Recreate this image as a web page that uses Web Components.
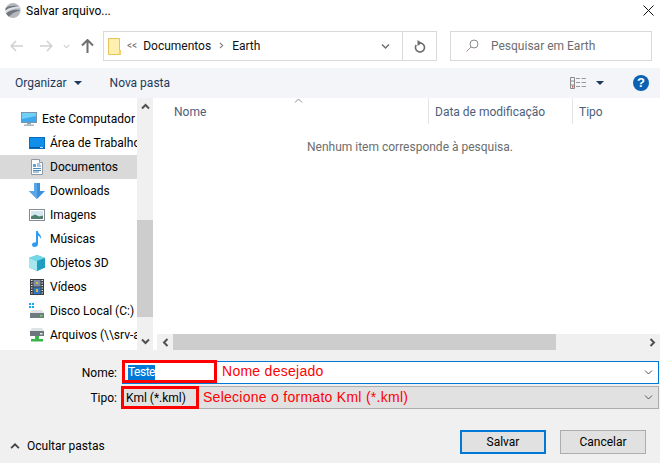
<!DOCTYPE html>
<html lang="pt">
<head>
<meta charset="utf-8">
<title>Salvar arquivo...</title>
<style>
    html, body { margin: 0; padding: 0; background: #fff; }
    body { font: 12px Roboto, "Noto Sans", sans-serif; color: #000; }
</style>
</head>
<body>
<save-dialog></save-dialog>

<script>
const chevron = (dir, color, width = 1.6, size = 9) => {
    const paths = {
        up: 'M1 6.5 4.5 3 8 6.5',
        down: 'M1 2.5 4.5 6 8 2.5',
        left: 'M6.5 1 3 4.5 6.5 8',
        right: 'M2.5 1 6 4.5 2.5 8'
    };
    return `<svg width="${size}" height="${size}" viewBox="0 0 9 9"><path d="${paths[dir]}" fill="none" stroke="${color}" stroke-width="${width}"/></svg>`;
};

const treeIcons = {
    computer: `<svg width="16" height="16" viewBox="0 0 16 16"><rect x=".5" y="1.5" width="15" height="10" fill="#3ea8ee" stroke="#7b95a8"/><path d="M1 2h14v3L1 8z" fill="#6fd0f8"/><rect x="6" y="12" width="4" height="1.5" fill="#8fa3b1"/><rect x="3" y="13.5" width="10" height="1.5" fill="#a9b6c0"/></svg>`,
    desktop: `<svg width="16" height="16" viewBox="0 0 16 16"><rect x=".5" y="2.5" width="15" height="11" fill="#0f8fea" stroke="#0a6cc0"/><path d="M1 12h14v1H1z" fill="#0859a5"/><path d="M11 12h3v1h-3z" fill="#bfe4fb"/></svg>`,
    documents: `<svg width="16" height="16" viewBox="0 0 16 16"><path d="M2.5.5h8l3 3v12h-11z" fill="#fff" stroke="#8f9aa5"/><path d="M10.5.5v3h3" fill="#e4eef6" stroke="#8f9aa5"/><path d="M4 5h3v3H4z" fill="#5ba3d8"/><path d="M8 5h3M8 7h4M4 9.5h8M4 11.5h8M4 13h6" stroke="#4d8bbd"/></svg>`,
    downloads: `<svg width="16" height="16" viewBox="0 0 16 16"><path d="M5 0h6v8h5l-8 8-8-8h5z" fill="#3b8fdd"/><path d="M5 0h3v16L0 8h5z" fill="#5ba6e6"/></svg>`,
    images: `<svg width="16" height="16" viewBox="0 0 16 16"><rect x=".5" y="2.500" width="15" height="11" fill="#fff" stroke="#858d94"/><rect x="2" y="4" width="12" height="8" fill="#d5e6ee"/><path d="M2 9.500l4-2 4 2 4-1V12H2z" fill="#4f7f6e"/></svg>`,
    music: `<svg width="16" height="16" viewBox="0 0 16 16"><path d="M7 0h1.800c.3 3 4.200 3.800 3.200 8-.6-2-2-3-3-3.200V13c0 1.700-1.500 3-3.500 3S3 15 3 13.500 4.800 11 7 11.200z" fill="#2d9cf0"/></svg>`,
    objects: `<svg width="16" height="16" viewBox="0 0 16 16"><path d="M8 0l8 3v9.500L8 16 0 12.500V3z" fill="#38bcd2"/><path d="M0 3l8 3v10l-8-3.500z" fill="#a5e6ef"/><path d="M8 0l8 3-8 3-8-3z" fill="#75d7e5"/><path d="M8 6l8-3v9.500L8 16z" fill="#1e9fc0"/></svg>`,
    videos: `<svg width="16" height="16" viewBox="0 0 16 16"><rect x="1" y="0" width="14" height="16" fill="#3b3f44"/><path d="M2 1.500h1.500M2 4h1.500M2 6.500h1.500M2 9h1.500M2 11.500h1.500M2 14h1.500M12.500 1.500H14M12.500 4H14M12.500 6.500H14M12.500 9H14M12.500 11.500H14M12.500 14H14" stroke="#e8e8e8"/><rect x="4.500" y="1" width="7" height="6.500" fill="#7d8fa4"/><rect x="4.500" y="8.500" width="7" height="6.500" fill="#2f78c4"/><path d="M7 3h2v2H7zM7 10h2v3H7z" fill="#e3b341"/></svg>`,
    disk: `<svg width="16" height="16" viewBox="0 0 16 16"><path d="M0 0h2v2H0zM3 0h2v2H3zM0 3h2v2H0zM3 3h2v2H3z" fill="#18a4f0"/><path d="M3 7h10l2 3H1z" fill="#dfe3e6"/><rect x="1" y="10" width="14" height="5" fill="#707a82"/><rect x="11" y="12" width="2.500" height="1.500" fill="#5fe05f"/></svg>`,
    network: `<svg width="16" height="16" viewBox="0 0 16 16"><path d="M3 1h10l2 3H1z" fill="#dfe3e6"/><rect x="1" y="4" width="14" height="5" fill="#6d767d"/><rect x="11" y="6" width="2.500" height="1.500" fill="#d6f5d6"/><path d="M6 9h4v3H6zM2 12h12v2.500H2z" fill="#39b54a"/></svg>`
};

class DialogTitlebar extends HTMLElement {
    constructor() {
        super();
        this.attachShadow({ mode: 'open' });
        this.shadowRoot.innerHTML = `
            <style>
                :host { display: flex; align-items: center; height: 21px; padding: 0 0 10px 5px; }
                svg { flex: none; }
                .title { margin-left: 5px; flex: 1; }
                .close { margin-right: 6px; }
            </style>
            <svg width="16" height="15" viewBox="0 0 16 15">
                <circle cx="8" cy="7.500" r="7.500" fill="#b4b8bd"/>
                <path d="M.6 5C4 2.600 10 2.200 15 3.600 10 3.500 5 4.500.4 7.500zM.8 10.500C5 7 11 6 15.700 7.500 11 8 7 10 4 13.700z" fill="#717780"/>
                <path d="M.4 7.500C5 4.500 10 3.500 15 3.600l.7 1.800C10 5 5 6.500.8 10.500z" fill="#dfe1e4"/>
            </svg>
            <span class="title"><slot></slot></span>
            <svg class="close" width="11" height="11" viewBox="0 0 11 11"><path d="M.5.500l10 10M10.500.500l-10 10" stroke="#111" fill="none"/></svg>
        `;
    }
}

class NavBar extends HTMLElement {
    constructor() {
        super();
        this.attachShadow({ mode: 'open' });
        this.shadowRoot.innerHTML = `
            <style>
                :host { display: flex; height: 30px; padding-bottom: 7px; }
                .arrows { width: 103px; display: flex; align-items: center; box-sizing: border-box; padding-left: 10px; flex: none; }
                .arrows svg { flex: none; }
                .address { width: 334px; box-sizing: border-box; border: 1px solid #d9d9d9; display: flex; align-items: center; padding-left: 4px; flex: none; }
                .folder { margin-right: 6px; flex: none; }
                .crumbs { flex: 1; display: flex; align-items: center; color: #111; padding-bottom: 1px; }
                .quote { color: #707070; font-size: 10px; margin-right: 6px; }
                .sep { margin: 0 7px 0 7px; display: flex; }
                .drop { width: 33px; display: flex; justify-content: center; flex: none; }
                .refresh { width: 33px; height: 100%; border-left: 1px solid #d9d9d9; display: flex; align-items: center; justify-content: center; flex: none; }
                .search { width: 202px; margin-left: 13px; box-sizing: border-box; border: 1px solid #d9d9d9; display: flex; align-items: center; padding-left: 15px; color: #6d6d6d; flex: none; padding-bottom: 1px; }
                .search svg { margin-right: 12px; }
            </style>
            <div class="arrows">
                <svg width="13" height="12" viewBox="0 0 13 12"><path d="M6 1 1.200 6 6 11M1.500 6H13" fill="none" stroke="#cfcfcf" stroke-width="1.500"/></svg>
                <svg style="margin-left:17px" width="13" height="12" viewBox="0 0 13 12"><path d="M7 1l4.800 5L7 11M11.500 6H0" fill="none" stroke="#cfcfcf" stroke-width="1.500"/></svg>
                <span style="margin-left:10px;display:flex">${chevron('down', '#cfcfcf', 1.300, 7)}</span>
                <svg style="margin-left:11px" width="13" height="14" viewBox="0 0 13 14"><path d="M1 6.500 6.500 1 12 6.500M6.500 1.500V14" fill="none" stroke="#6f6f6f" stroke-width="2"/></svg>
            </div>
            <div class="address">
                <svg class="folder" width="13" height="17" viewBox="0 0 13 17"><path d="M.5.500h10v13H13v3H.500z" fill="#fde9a0"/><path d="M.5.500h11v16H.5z" fill="#fff0b0" stroke="#e5c35c"/><path d="M11 12h2v5h-2z" fill="#f3cf66"/></svg>
                <div class="crumbs">
                    <span class="quote">&lt;&lt;</span>
                    <span>Documentos</span>
                    <span class="sep">${chevron('right', '#707070', 1.300, 7)}</span>
                    <span>Earth</span>
                </div>
                <span class="drop">${chevron('down', '#707070', 1.500)}</span>
                <span class="refresh"><svg width="12" height="13" viewBox="0 0 12 13"><path d="M6.500 3A4.500 4.500 0 1 1 2.200 5" fill="none" stroke="#6d6d6d" stroke-width="1.600"/><path d="M3.500 0v6L8 3z" fill="#6d6d6d"/></svg></span>
            </div>
            <div class="search">
                <svg width="13" height="13" viewBox="0 0 13 13"><circle cx="8" cy="5" r="4" fill="none" stroke="#8a8a8a"/><path d="M5 8l-4.500 4.500" stroke="#b18a8a"/></svg>
                <span>Pesquisar em Earth</span>
            </div>
        `;
    }
}

class ToolBar extends HTMLElement {
    constructor() {
        super();
        this.attachShadow({ mode: 'open' });
        this.shadowRoot.innerHTML = `
            <style>
                :host { display: flex; align-items: center; height: 30px; background: #f3f5f8; color: #1e395b; padding-left: 15px; box-sizing: border-box; }
                .caret { width: 0; height: 0; border: 4px solid transparent; border-top: 4px solid #1e395b; border-bottom: 0; margin-left: 7px; }
                .new { margin-left: 28px; flex: 1; }
                .views { display: flex; align-items: center; margin-right: 29px; }
                .views .caret { margin-left: 10px; }
                .help { width: 16px; height: 16px; margin-right: 11px; border-radius: 50%; background: #0b62b5; color: #fff; font: bold 13px/16px "Liberation Sans", sans-serif; text-align: center; }
            </style>
            <span>Organizar</span><span class="caret"></span>
            <span class="new">Nova pasta</span>
            <div class="views">
                <svg width="16" height="12" viewBox="0 0 16 12"><path d="M.5.500h4v11h-4zM.5 4h4M.5 8h4" fill="none" stroke="#8a8a8a"/><path d="M6 1.500h4M11.500 1.500H16M6 5.500h4M11.500 5.500H16M6 9.500h4M11.500 9.500H16" stroke="#9a9a9a"/><path d="M2 9h1.500v1.500H2z" fill="#d04040"/></svg>
                <span class="caret"></span>
            </div>
            <div class="help">?</div>
        `;
    }
}

class TreeItem extends HTMLElement {
    constructor() {
        super();
        this.attachShadow({ mode: 'open' });
        const icon = treeIcons[this.getAttribute('icon')] || '';
        this.shadowRoot.innerHTML = `
            <style>
                :host { display: flex; align-items: center; height: 24px; padding-left: 29px; white-space: nowrap; color: #000; }
                :host([root]) { padding-left: 21px; }
                :host([selected]) { background: #d9d9d9; }
                svg { flex: none; margin-right: 5px; }
            </style>
            ${icon}<slot></slot>
        `;
    }
}

class ScrollBar extends HTMLElement {
    constructor() {
        super();
        this.attachShadow({ mode: 'open' });
        const horizontal = this.hasAttribute('horizontal');
        const a = horizontal ? 'left' : 'up';
        const b = horizontal ? 'right' : 'down';
        this.shadowRoot.innerHTML = `
            <style>
                :host { display: flex; flex: none; background: #f0f0f0; flex-direction: column; width: 16px; }
                :host([horizontal]) { flex-direction: row; width: auto; height: 16px; }
                .arrow { flex: none; width: 16px; height: 17px; display: flex; align-items: center; justify-content: center; }
                .before { flex: none; flex-basis: var(--before); }
                .thumb { flex: none; flex-basis: var(--thumb); background: #cdcdcd; }
                .after { flex: 1; }
            </style>
            <div class="arrow">${chevron(a, '#505050', 2)}</div>
            <div class="before"></div>
            <div class="thumb"></div>
            <div class="after"></div>
            <div class="arrow">${chevron(b, '#505050', 2)}</div>
        `;
    }
}

class NavTree extends HTMLElement {
    constructor() {
        super();
        this.attachShadow({ mode: 'open' });
        this.shadowRoot.innerHTML = `
            <style>
                :host { display: flex; flex: none; height: 100%; }
                .items { width: 137px; overflow: hidden; padding-top: 9px; box-sizing: border-box; }
                scroll-bar { --before: 105px; --thumb: 97px; }
                .gap { width: 4px; }
            </style>
            <div class="items"><slot></slot></div>
            <scroll-bar></scroll-bar>
            <div class="gap"></div>
        `;
    }
}

class FileList extends HTMLElement {
    constructor() {
        super();
        this.attachShadow({ mode: 'open' });
        this.shadowRoot.innerHTML = `
            <style>
                :host { display: flex; flex-direction: column; flex: 1; min-width: 0; position: relative; }
                .head { display: flex; height: 26px; color: #4c607a; align-items: center; flex: none; }
                .col { box-sizing: border-box; height: 100%; display: flex; align-items: center; padding: 2px 0 0 6px; }
                .col + .col { border-left: 1px solid #e5e5e5; }
                .name { width: 271px; padding-left: 17px; }
                .date { width: 144px; }
                .type { flex: 1; }
                .sort { position: absolute; left: 137px; top: -2px; display: flex; }
                .body { flex: 1; text-align: center; color: #6d6d6d; padding: 16px 0 0 3px; }
                scroll-bar { --before: 0px; --thumb: 383px; }
            </style>
            <div class="head">
                <div class="col name">Nome</div>
                <div class="col date">Data de modificação</div>
                <div class="col type">Tipo</div>
            </div>
            <span class="sort">${chevron('up', '#8a8a8a', 1, 9)}</span>
            <div class="body"><slot></slot></div>
            <scroll-bar horizontal></scroll-bar>
        `;
    }
}

class FormPanel extends HTMLElement {
    constructor() {
        super();
        this.attachShadow({ mode: 'open' });
        this.shadowRoot.innerHTML = `
            <style>
                :host { display: flex; flex-direction: column; flex: none; height: 113px; background: #f0f0f0; box-sizing: border-box; padding-top: 11px; position: relative; }
                .row { display: flex; align-items: center; height: 23px; }
                .row + .row { margin-top: 2px; }
                label { width: 117px; text-align: right; margin-right: 5px; flex: none; }
                .field { flex: 1; height: 100%; box-sizing: border-box; margin-right: 1px; display: flex; align-items: center; padding-left: 5px; justify-content: space-between; }
                .name { background: #fff; border: 1px solid #0078d7; }
                .type { background: #e1e1e1; border: 1px solid #adadad; padding-left: 3px; }
                .selected { background: #0078d7; color: #fff; line-height: 15px; letter-spacing: -.5px; margin-top: -1px; }
                .drop { display: flex; margin-right: 5px; }
                .bottom { display: flex; align-items: center; margin-top: 21px; }
                .toggle { display: flex; align-items: center; margin-left: 10px; flex: 1; margin-top: 8px; }
                .toggle svg { margin-right: 7px; }
                button { width: 86px; height: 24px; box-sizing: border-box; background: #e1e1e1; border: 1px solid #adadad; font: inherit; color: #000; padding: 0; }
                button.primary { border: 2px solid #0078d7; margin-right: 14px; }
                button:last-child { margin-right: 14px; }
                .mark { position: absolute; border: 3px solid #f00; box-sizing: border-box; }
                .note { position: absolute; color: #f00; font-family: "Liberation Sans", sans-serif; font-size: 14px; line-height: 16px; letter-spacing: .27px; white-space: nowrap; }
            </style>
            <div class="row">
                <label>Nome:</label>
                <div class="field name"><span class="selected">Teste</span><span class="drop">${chevron('down', '#555', 1, 9)}</span></div>
            </div>
            <div class="row">
                <label>Tipo:</label>
                <div class="field type"><span>Kml (*.kml)</span><span class="drop">${chevron('down', '#555', 1, 9)}</span></div>
            </div>
            <div class="bottom">
                <div class="toggle">${chevron('up', '#444', 1.600, 10)}<span>Ocultar pastas</span></div>
                <button class="primary">Salvar</button>
                <button>Cancelar</button>
            </div>
            <div class="mark" style="left:122px;top:10px;width:95px;height:23px"></div>
            <div class="mark" style="left:121px;top:36px;width:78px;height:23px"></div>
            <span class="note" style="left:222px;top:13px">Nome desejado</span>
            <span class="note" style="left:203px;top:39px">Selecione o formato Kml (*.kml)</span>
        `;
    }
}

class SaveDialog extends HTMLElement {
    constructor() {
        super();
        this.attachShadow({ mode: 'open' });
        this.shadowRoot.innerHTML = `
            <style>
                :host { display: flex; flex-direction: column; width: 660px; height: 463px; overflow: hidden; background: #fff; }
                .main { display: flex; flex: 1; min-height: 0; }
            </style>
            <dialog-titlebar>Salvar arquivo...</dialog-titlebar>
            <nav-bar></nav-bar>
            <tool-bar></tool-bar>
            <div class="main">
                <nav-tree>
                    <tree-item root icon="computer">Este Computador</tree-item>
                    <tree-item icon="desktop">Área de Trabalho</tree-item>
                    <tree-item icon="documents" selected>Documentos</tree-item>
                    <tree-item icon="downloads">Downloads</tree-item>
                    <tree-item icon="images">Imagens</tree-item>
                    <tree-item icon="music">Músicas</tree-item>
                    <tree-item icon="objects">Objetos 3D</tree-item>
                    <tree-item icon="videos">Vídeos</tree-item>
                    <tree-item icon="disk">Disco Local (C:)</tree-item>
                    <tree-item icon="network">Arquivos (\\\\srv-arquivos)</tree-item>
                </nav-tree>
                <file-list>Nenhum item corresponde à pesquisa.</file-list>
            </div>
            <form-panel></form-panel>
        `;
    }
}

customElements.define('dialog-titlebar', DialogTitlebar);
customElements.define('nav-bar', NavBar);
customElements.define('tool-bar', ToolBar);
customElements.define('tree-item', TreeItem);
customElements.define('scroll-bar', ScrollBar);
customElements.define('nav-tree', NavTree);
customElements.define('file-list', FileList);
customElements.define('form-panel', FormPanel);
customElements.define('save-dialog', SaveDialog);
</script>
</body>
</html>
